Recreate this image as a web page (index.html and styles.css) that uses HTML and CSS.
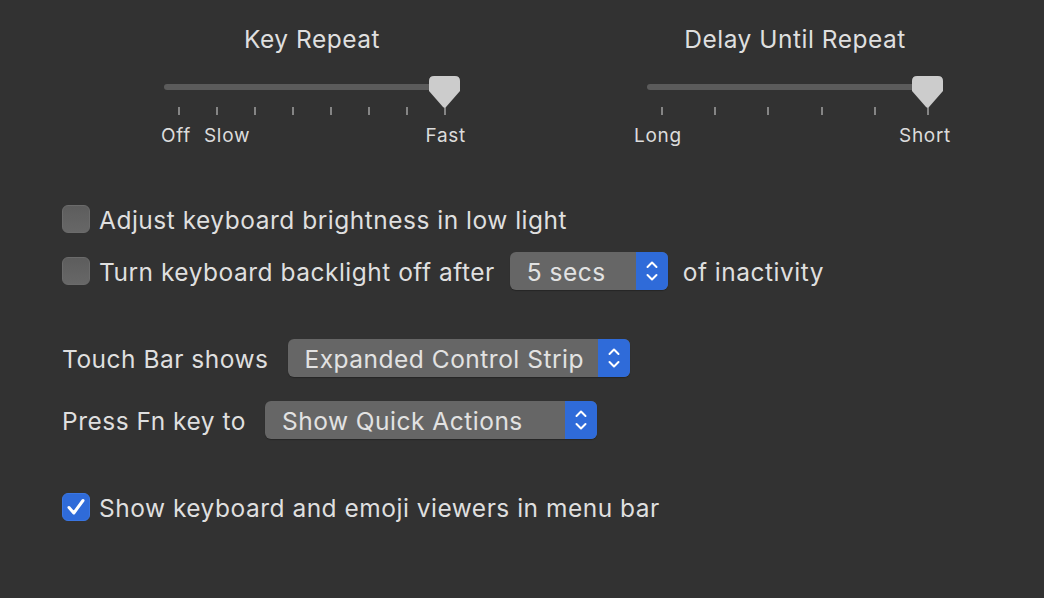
FILE: index.html
```html
<!DOCTYPE html>
<html>
<head>
<meta charset="utf-8">
<link rel="stylesheet" href="styles.css">
</head>
<body>
<div class="pane">
  <div class="sliders">
    <div class="slider">
      <div class="slider-title">Key Repeat</div>
      <div class="track">
        <svg class="thumb" width="31" height="33" viewBox="0 0 31 33"><path d="M5,0 H26 Q31,0 31,5 V15 L17,31 Q15.5,32.6 14,31 L0,15 V5 Q0,0 5,0 Z" fill="#cccccc"/></svg>
      </div>
      <div class="ticks">
        <span class="tick"></span><span class="tick"></span><span class="tick"></span><span class="tick"></span>
        <span class="tick"></span><span class="tick"></span><span class="tick"></span><span class="tick"></span>
      </div>
      <div class="labels">
        <span class="lbl lbl-off">Off</span>
        <span class="lbl lbl-slow">Slow</span>
        <span class="lbl lbl-fast">Fast</span>
      </div>
    </div>
    <div class="slider">
      <div class="slider-title">Delay Until Repeat</div>
      <div class="track">
        <svg class="thumb" width="31" height="33" viewBox="0 0 31 33"><path d="M5,0 H26 Q31,0 31,5 V15 L17,31 Q15.5,32.6 14,31 L0,15 V5 Q0,0 5,0 Z" fill="#cccccc"/></svg>
      </div>
      <div class="ticks">
        <span class="tick"></span><span class="tick"></span><span class="tick"></span>
        <span class="tick"></span><span class="tick"></span><span class="tick"></span>
      </div>
      <div class="labels">
        <span class="lbl lbl-long">Long</span>
        <span class="lbl lbl-short">Short</span>
      </div>
    </div>
  </div>

  <div class="options">
    <div class="group group-backlight">
      <div class="row">
        <span class="checkbox"></span>
        <span class="text">Adjust keyboard brightness in low light</span>
      </div>
      <div class="row">
        <span class="checkbox"></span>
        <span class="text">Turn keyboard backlight off after</span>
        <span class="popup popup-secs">
          <span class="popup-label">5 secs</span>
          <span class="popup-arrows"><svg width="12" height="20" viewBox="0 0 12 20"><path d="M1.5,6 L6,1.5 L10.5,6 M1.5,14 L6,18.5 L10.5,14" fill="none" stroke="#ffffff" stroke-width="2" stroke-linecap="round" stroke-linejoin="round"/></svg></span>
        </span>
        <span class="text">of inactivity</span>
      </div>
    </div>

    <div class="group group-touchbar">
      <div class="row">
        <span class="text">Touch Bar shows</span>
        <span class="popup popup-touch">
          <span class="popup-label">Expanded Control Strip</span>
          <span class="popup-arrows"><svg width="12" height="20" viewBox="0 0 12 20"><path d="M1.5,6 L6,1.5 L10.5,6 M1.5,14 L6,18.5 L10.5,14" fill="none" stroke="#ffffff" stroke-width="2" stroke-linecap="round" stroke-linejoin="round"/></svg></span>
        </span>
      </div>
      <div class="row">
        <span class="text">Press Fn key to</span>
        <span class="popup popup-fn">
          <span class="popup-label">Show Quick Actions</span>
          <span class="popup-arrows"><svg width="12" height="20" viewBox="0 0 12 20"><path d="M1.5,6 L6,1.5 L10.5,6 M1.5,14 L6,18.5 L10.5,14" fill="none" stroke="#ffffff" stroke-width="2" stroke-linecap="round" stroke-linejoin="round"/></svg></span>
        </span>
      </div>
    </div>

    <div class="group">
      <div class="row">
        <span class="checkbox checked"><svg width="28" height="28" viewBox="0 0 28 28"><path d="M7,14.5 L11.8,20 L21,7.5" fill="none" stroke="#ffffff" stroke-width="3" stroke-linecap="round" stroke-linejoin="round"/></svg></span>
        <span class="text">Show keyboard and emoji viewers in menu bar</span>
      </div>
    </div>
  </div>
</div>
</body>
</html>
```

FILE: styles.css
```css
html, body {
  margin: 0;
  padding: 0;
}

body {
  background: #323232;
  width: 1044px;
  height: 598px;
  overflow: hidden;
  font-family: Inter, "Noto Sans", "Liberation Sans", sans-serif;
  color: #dfdfdf;
}

.pane {
  display: flex;
  flex-direction: column;
  padding-top: 24px;
}

.sliders {
  display: flex;
  gap: 187px;
  padding-left: 164px;
}

.slider {
  width: 296px;
  display: flex;
  flex-direction: column;
}

.slider-title {
  font-size: 24.5px;
  letter-spacing: 0.5px;
  line-height: 30px;
  height: 30px;
  text-align: center;
  white-space: nowrap;
}

.track {
  position: relative;
  margin-top: 30px;
  height: 6px;
  border-radius: 3px;
  background: #5b5b5b;
}

.thumb {
  position: absolute;
  right: 0;
  top: -8px;
}

.ticks {
  margin-top: 17px;
  height: 8px;
  padding: 0 14px;
  display: flex;
  justify-content: space-between;
}

.tick {
  width: 2px;
  height: 8px;
  background: #858585;
}

.labels {
  margin-top: 10px;
  display: flex;
  font-size: 19px;
  letter-spacing: 0.7px;
  line-height: 22px;
  height: 22px;
  color: #dcdcdc;
}

.lbl-off { margin-left: -3px; }
.lbl-slow { margin-left: 13px; }
.lbl-fast { margin-left: auto; margin-right: -6px; }
.lbl-long { margin-left: -13px; }
.lbl-short { margin-left: auto; margin-right: -8px; }

.options {
  margin-top: 53px;
  padding-left: 62px;
  display: flex;
  flex-direction: column;
  gap: 49px;
}

.group {
  display: flex;
  flex-direction: column;
}

.group-backlight { gap: 14px; }
.group-touchbar { gap: 24px; }

.row {
  display: flex;
  align-items: center;
  height: 38px;
  font-size: 24.5px;
  letter-spacing: 0.5px;
  white-space: nowrap;
}

.text {
  padding-top: 2px;
}

.checkbox {
  width: 28px;
  height: 28px;
  box-sizing: border-box;
  border-radius: 6px;
  background: linear-gradient(#5d5d5d, #676767);
  border: 1px solid #6b6b6b;
  margin-right: 9px;
  flex: none;
}

.checkbox.checked {
  background: #2f6bd9;
  border-color: #3a76e2;
}

.checkbox.checked svg {
  display: block;
  margin: -1px;
}

.popup {
  display: flex;
  height: 38px;
  border-radius: 6px;
  background: #666666;
  overflow: hidden;
  margin: 0 15px;
  box-shadow: 0 1px 1px rgba(0,0,0,0.25);
}

.popup-label {
  flex: 1;
  display: flex;
  align-items: center;
  padding-left: 17px;
  padding-top: 2px;
  color: #e2e2e2;
}

.popup-arrows {
  width: 32px;
  background: #2f6bd9;
  display: flex;
  align-items: center;
  justify-content: center;
}

.popup-arrows svg { display: block; }

.popup-secs { width: 158px; }
.popup-touch { width: 342px; margin-left: 19px; }
.popup-fn { width: 332px; margin-left: 19px; }
```
